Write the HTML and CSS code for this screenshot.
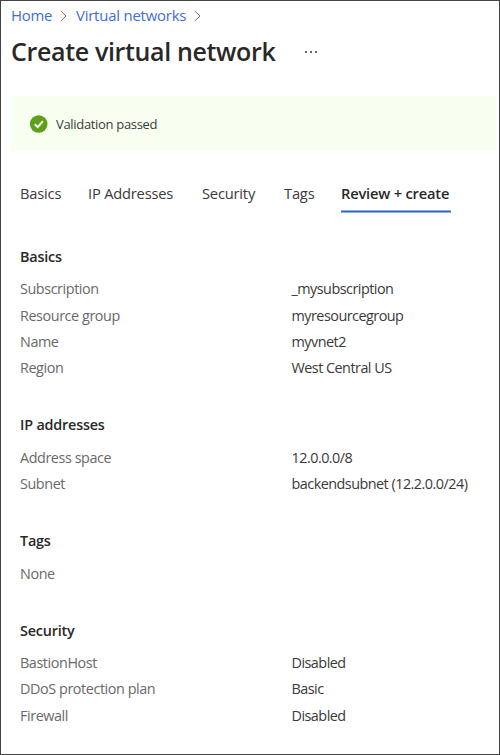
FILE: index.html
```html
<!DOCTYPE html>
<html lang="en">
<head>
<meta charset="utf-8">
<title>Create virtual network</title>
<link rel="stylesheet" href="styles.css">
</head>
<body>
<main class="blade">
  <nav class="breadcrumb">
    <a class="home">Home</a>
    <svg class="chevron" viewBox="0 0 7 12"><path d="M.8 1 6 6 .8 11"/></svg>
    <a class="networks">Virtual networks</a>
    <svg class="chevron" viewBox="0 0 7 12"><path d="M.8 1 6 6 .8 11"/></svg>
  </nav>
  <header class="title">
    <h1>Create virtual network</h1>
    <svg class="more" viewBox="0 0 13 2"><path d="M0 0h2v2H0zM5 0h2v2H5zM10 0h2v2h-2z"/></svg>
  </header>
  <div class="banner">
    <svg class="check" viewBox="0 0 18 18"><circle cx="8.7" cy="9" r="8.8"/><path d="m4.8 9.2 2.9 2.9 5.2-6"/></svg>
    <span>Validation passed</span>
  </div>
  <nav class="tabs">
    <a class="tab-basics">Basics</a>
    <a class="tab-ip">IP Addresses</a>
    <a class="tab-security">Security</a>
    <a class="tab-tags">Tags</a>
    <a class="active">Review + create</a>
  </nav>
  <div class="summary">
    <section>
      <h2>Basics</h2>
      <dl>
        <dt>Subscription</dt><dd>_mysubscription</dd>
        <dt>Resource group</dt><dd>myresourcegroup</dd>
        <dt>Name</dt><dd>myvnet2</dd>
        <dt>Region</dt><dd>West Central US</dd>
      </dl>
    </section>
    <section>
      <h2>IP addresses</h2>
      <dl>
        <dt>Address space</dt><dd>12.0.0.0/8</dd>
        <dt>Subnet</dt><dd>backendsubnet (12.2.0.0/24)</dd>
      </dl>
    </section>
    <section>
      <h2>Tags</h2>
      <dl>
        <dt>None</dt><dd></dd>
      </dl>
    </section>
    <section>
      <h2>Security</h2>
      <dl>
        <dt>BastionHost</dt><dd>Disabled</dd>
        <dt>DDoS protection plan</dt><dd>Basic</dd>
        <dt>Firewall</dt><dd>Disabled</dd>
      </dl>
    </section>
  </div>
</main>
</body>
</html>
```
FILE: styles.css
```css
* { box-sizing: border-box; }
body {
  margin: 0;
  background: #fff;
  color: #3b3a39;
  font: 14.4px/26.3px "Open Sans", "Noto Sans", sans-serif;
  letter-spacing: -0.2px;
}
.blade {
  height: 755px;
  border: 1px solid #444;
  overflow: hidden;
}
.breadcrumb {
  display: flex;
  align-items: center;
  height: 29px;
  padding: 0 0 0 10px;
  color: #3f70d0;
  font-size: 14.9px;
}
.home { width: 49px; }
.networks { width: 118px; }
.chevron {
  width: 7px;
  height: 12px;
  fill: none;
  stroke: #777;
  stroke-width: 1;
}
.breadcrumb .chevron { margin-right: 9px; }
.title {
  display: flex;
  align-items: center;
  height: 43px;
  padding-left: 10px;
}
h1 {
  width: 294px;
  margin: 0 0 2px;
  color: #292827;
  font-size: 25px;
  font-weight: 600;
  line-height: 36px;
  letter-spacing: -0.35px;
}
.more { width: 13px; height: 2px; fill: #666; }
.banner {
  display: flex;
  align-items: center;
  gap: 8px;
  height: 55px;
  margin: 23px 2px 0 10px;
  padding: 1px 0 0 19px;
  background: #f8fff0;
  font-size: 13px;
  letter-spacing: -0.32px;
}
.check { width: 18px; height: 18px; fill: #5ea01c; overflow: visible; }
.check path { fill: none; stroke: #fff; stroke-width: 2; }
.tabs {
  display: flex;
  height: 61px;
  padding: 29px 0 0 19px;
  font-size: 14.7px;
}
.tab-basics { width: 68px; }
.tab-ip { width: 114px; }
.tab-security { width: 82px; }
.tab-tags { width: 57px; }
.active {
  width: 110px;
  height: 32px;
  border-bottom: 1px solid #2b62c4;
  box-shadow: 0 1px #8fb1ea, inset 0 -1px #8fb1ea;
  color: #292827;
  font-weight: 600;
  white-space: nowrap;
}
.summary { padding: 32px 0 0 19px; }
section { margin-bottom: 30.7px; }
h2 {
  margin: 0 0 6.2px;
  color: #292827;
  font: inherit;
  font-weight: 600;
}
dl {
  display: grid;
  grid-template-columns: 271.5px 1fr;
  grid-auto-rows: 26.3px;
  margin: 0;
}
dt { color: #6a6968; letter-spacing: -0.43px; }
dd { margin: 0; letter-spacing: -0.52px; }
```
